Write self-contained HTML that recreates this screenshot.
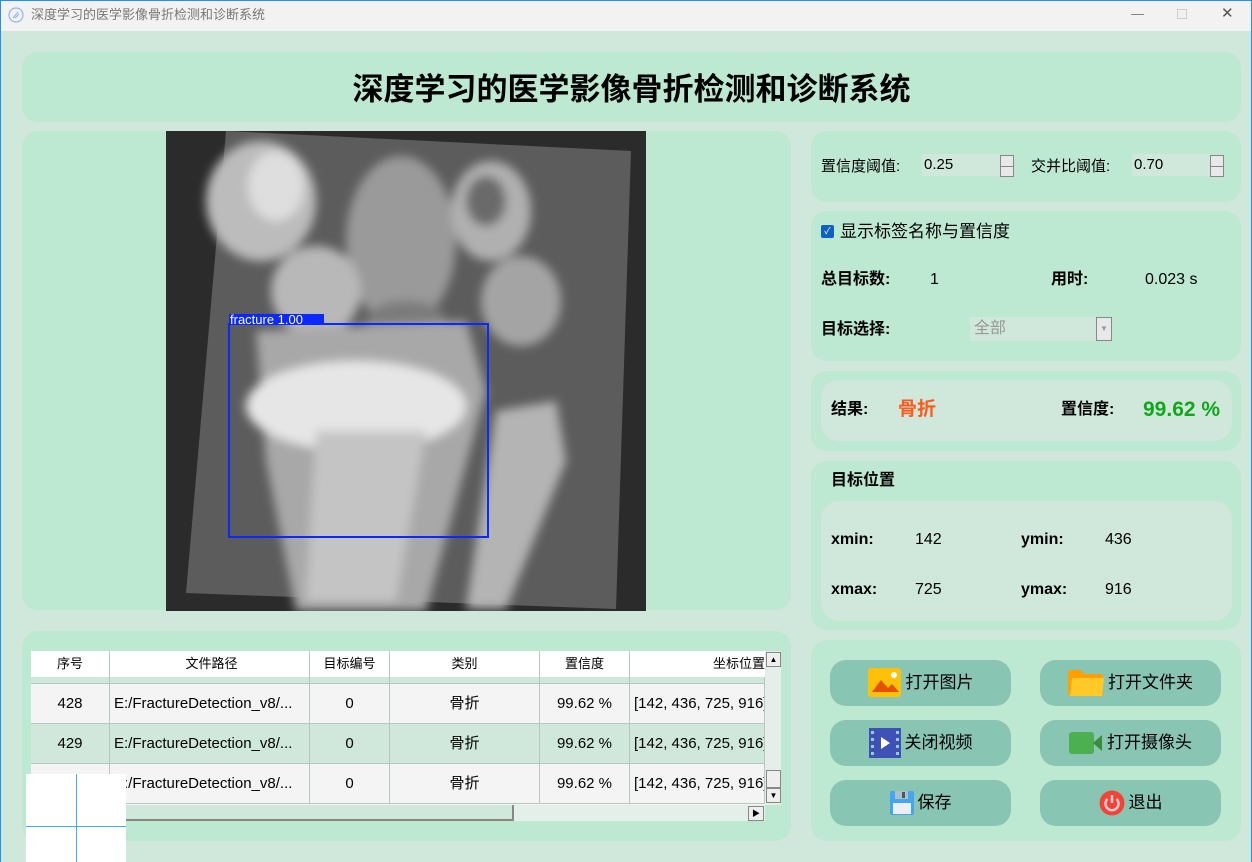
<!DOCTYPE html>
<html><head><meta charset="utf-8"><style>
*{margin:0;padding:0;box-sizing:border-box}
body{width:1252px;height:862px;overflow:hidden;background:#cfe8db;font-family:"Liberation Sans","Noto Sans CJK SC",sans-serif;position:relative;color:#000}
.a{position:absolute;line-height:20px;white-space:nowrap}
.p{position:absolute;background:#bde9d3;border-radius:16px}
.in{position:absolute;background:#cfe8db;border-radius:18px}
.b{font-weight:bold}
.btn{position:absolute;width:181px;height:46px;background:#88c5b2;border-radius:16px;font-size:17px;display:flex;align-items:center;justify-content:center;gap:4px;line-height:20px}
.spin{position:absolute;width:14px;height:22px;background:#e8e8e8;border:1px solid #888}
.spin:after{content:"";position:absolute;left:0;right:0;top:10px;border-top:1px solid #888}
.row{position:absolute;left:0;width:734px;height:40px;border-bottom:1px solid #b8c8c0;font-size:15px}
.row div{position:absolute;top:0;height:40px;line-height:40px;text-align:center;border-right:1px solid #b8c8c0;overflow:hidden;white-space:nowrap}
.c1{left:0;width:79px}.c2{left:79px;width:200px;text-align:left!important;padding-left:4px}.c3{left:279px;width:80px}.c4{left:359px;width:150px}.c5{left:509px;width:90px}.c6{left:599px;width:135px;text-align:left!important;padding-left:4px}
</style></head><body>
<div class="a" style="left:0;top:0;width:1252px;height:31px;background:#f2f2f2;border-top:1px solid #1e90ff"></div>
<div class="a" style="left:0;top:0;width:1px;height:862px;background:#1e90ff"></div>
<div class="a" style="right:0;top:0;width:1px;height:862px;background:#1e90ff"></div>
<svg class="a" style="left:8px;top:7px" width="16" height="16"><circle cx="8" cy="8" r="7" fill="none" stroke="#8fb8e8" stroke-width="1.2"/><path d="M5 11 L10 5 M7 11 L11 7" stroke="#8fb8e8" stroke-width="1.2"/></svg>
<div class="a" style="left:31px;top:5px;font-size:13px;color:#777">深度学习的医学影像骨折检测和诊断系统</div>
<div class="a" style="left:1131px;top:4px;font-size:13px;color:#777">—</div>
<div class="a" style="left:1177px;top:9px;width:10px;height:10px;border:1px solid #ccc"></div>
<div class="a" style="left:1221px;top:4px;font-size:15px;color:#555">✕</div>

<div class="p" style="left:22px;top:52px;width:1219px;height:70px"></div>
<div class="a b" style="left:22px;top:72px;width:1219px;text-align:center;font-size:31px;line-height:36px">深度学习的医学影像骨折检测和诊断系统</div>

<div class="p" style="left:22px;top:131px;width:769px;height:479px"></div>
<svg class="a" style="left:166px;top:131px" width="480" height="480">
<defs><filter id="bl"><feGaussianBlur stdDeviation="5"/></filter></defs>
<rect width="480" height="480" fill="#2b2b2b"/>
<polygon points="60,0 465,20 450,478 20,462" fill="#5c5c5c"/>
<g filter="url(#bl)">
<ellipse cx="95" cy="70" rx="55" ry="60" fill="#bcbcbc"/><ellipse cx="110" cy="55" rx="28" ry="35" fill="#dedede"/>
<ellipse cx="235" cy="110" rx="55" ry="85" fill="#9a9a9a"/>
<ellipse cx="325" cy="80" rx="40" ry="50" fill="#b0b0b0"/><ellipse cx="320" cy="70" rx="20" ry="25" fill="#6a6a6a"/>
<ellipse cx="150" cy="160" rx="45" ry="45" fill="#b8b8b8"/><ellipse cx="355" cy="170" rx="40" ry="45" fill="#a4a4a4"/>
<ellipse cx="240" cy="190" rx="40" ry="20" fill="#7a7a7a"/>
<polygon points="90,200 300,190 320,260 260,480 130,480 100,330" fill="#a8a8a8"/>
<ellipse cx="190" cy="275" rx="110" ry="45" fill="#e6e6e6"/>
<polygon points="150,300 260,300 230,470 140,470" fill="#c4c4c4"/>
<polygon points="330,280 390,270 400,330 340,478 300,478" fill="#b4b4b4"/>
</g>
<rect x="63" y="193" width="259" height="213" fill="none" stroke="#0a28ff" stroke-width="2"/>
<rect x="63" y="183" width="95" height="11" fill="#0a28ff"/>
<text x="64" y="193" fill="#fff" font-size="13" font-family="Liberation Sans">fracture  1.00</text>
</svg>

<div class="p" style="left:22px;top:631px;width:769px;height:210px"></div>
<div class="a" style="left:31px;top:651px;width:734px;height:154px;overflow:hidden;background:#f4f4f4">
<div class="row" style="top:0;height:26px;background:#fff;border:0;font-size:13px"><div class="c1" style="height:26px;line-height:26px">序号</div><div class="c2" style="height:26px;line-height:26px;text-align:center!important">文件路径</div><div class="c3" style="height:26px;line-height:26px">目标编号</div><div class="c4" style="height:26px;line-height:26px">类别</div><div class="c5" style="height:26px;line-height:26px">置信度</div><div class="c6" style="height:26px;line-height:26px;text-align:right!important;padding-left:0;border:0">坐标位置</div></div>
<div class="row" style="top:26px;height:7px;background:#cfe8db"><div class="c1" style="height:7px"></div><div class="c2" style="height:7px"></div><div class="c3" style="height:7px"></div><div class="c4" style="height:7px"></div><div class="c5" style="height:7px"></div><div class="c6" style="height:7px"></div></div>
<div class="row" style="top:33px"><div class="c1">428</div><div class="c2">E:/FractureDetection_v8/...</div><div class="c3">0</div><div class="c4">骨折</div><div class="c5">99.62 %</div><div class="c6">[142, 436, 725, 916]</div></div>
<div class="row" style="top:73px;background:#cfe8db"><div class="c1">429</div><div class="c2">E:/FractureDetection_v8/...</div><div class="c3">0</div><div class="c4">骨折</div><div class="c5">99.62 %</div><div class="c6">[142, 436, 725, 916]</div></div>
<div class="row" style="top:113px"><div class="c1">430</div><div class="c2">E:/FractureDetection_v8/...</div><div class="c3">0</div><div class="c4">骨折</div><div class="c5">99.62 %</div><div class="c6">[142, 436, 725, 916]</div></div>
</div>
<div class="a" style="left:765px;top:651px;width:16px;height:154px;background:#e4efe9"></div>
<div class="a" style="left:766px;top:652px;width:15px;height:15px;background:#eee;border:1px solid #888;font-size:8px;text-align:center;line-height:13px">▲</div>
<div class="a" style="left:766px;top:770px;width:15px;height:18px;background:#eee;border:1px solid #888"></div>
<div class="a" style="left:766px;top:788px;width:15px;height:15px;background:#eee;border:1px solid #888;font-size:8px;text-align:center;line-height:13px">▼</div>
<div class="a" style="left:110px;top:805px;width:655px;height:16px;background:#e4efe9"></div>
<div class="a" style="left:110px;top:805px;width:404px;height:16px;background:#cfe8db;border-bottom:2px solid #888;border-right:2px solid #888"></div>
<div class="a" style="left:748px;top:806px;width:16px;height:15px;background:#eee;border:1px solid #888;font-size:8px;text-align:center;line-height:13px">▶</div>
<div class="a" style="left:26px;top:774px;width:100px;height:88px;background:#fff"></div>
<div class="a" style="left:76px;top:774px;width:1px;height:88px;background:#44aaff"></div>
<div class="a" style="left:26px;top:826px;width:100px;height:1px;background:#44aaff"></div>

<div class="p" style="left:811px;top:131px;width:430px;height:71px"></div>
<div class="a" style="left:821px;top:157px;font-size:15px">置信度阈值:</div>
<div class="a" style="left:922px;top:154px;width:78px;height:22px;background:#cfe8db;font-size:15px;padding:1px 2px">0.25</div>
<div class="spin" style="left:1000px;top:155px"></div>
<div class="a" style="left:1031px;top:157px;font-size:15px">交并比阈值:</div>
<div class="a" style="left:1132px;top:154px;width:78px;height:22px;background:#cfe8db;font-size:15px;padding:1px 2px">0.70</div>
<div class="spin" style="left:1210px;top:155px"></div>

<div class="p" style="left:811px;top:211px;width:430px;height:150px"></div>
<div class="a" style="left:821px;top:225px;width:13px;height:13px;background:#0b62c4;border-radius:2px;color:#fff;font-size:9px;line-height:13px;text-align:center">✓</div>
<div class="a" style="left:840px;top:222px;font-size:17px">显示标签名称与置信度</div>
<div class="a b" style="left:821px;top:270px;font-size:16px">总目标数:</div>
<div class="a" style="left:930px;top:270px;font-size:16px">1</div>
<div class="a b" style="left:1051px;top:270px;font-size:16px">用时:</div>
<div class="a" style="left:1145px;top:270px;font-size:16px">0.023 s</div>
<div class="a b" style="left:821px;top:320px;font-size:16px">目标选择:</div>
<div class="a" style="left:970px;top:317px;width:127px;height:24px;background:#cfe8db;font-size:16px;color:#999;padding:2px 4px">全部</div>
<div class="a" style="left:1096px;top:317px;width:16px;height:24px;background:#e8e8e8;border:1px solid #888;font-size:8px;color:#999;text-align:center;line-height:22px">▼</div>

<div class="p" style="left:811px;top:371px;width:430px;height:80px"></div>
<div class="in" style="left:821px;top:380px;width:411px;height:61px"></div>
<div class="a b" style="left:831px;top:400px;font-size:16px">结果:</div>
<div class="a b" style="left:898px;top:400px;font-size:19px;color:#ff5a1a">骨折</div>
<div class="a b" style="left:1061px;top:400px;font-size:16px">置信度:</div>
<div class="a b" style="left:1143px;top:400px;font-size:21px;color:#10a81a">99.62 %</div>

<div class="p" style="left:811px;top:461px;width:430px;height:169px"></div>
<div class="a b" style="left:831px;top:471px;font-size:16px">目标位置</div>
<div class="in" style="left:821px;top:501px;width:411px;height:120px"></div>
<div class="a b" style="left:831px;top:530px;font-size:16px">xmin:</div><div class="a" style="left:915px;top:530px;font-size:16px">142</div>
<div class="a b" style="left:1021px;top:530px;font-size:16px">ymin:</div><div class="a" style="left:1105px;top:530px;font-size:16px">436</div>
<div class="a b" style="left:831px;top:580px;font-size:16px">xmax:</div><div class="a" style="left:915px;top:580px;font-size:16px">725</div>
<div class="a b" style="left:1021px;top:580px;font-size:16px">ymax:</div><div class="a" style="left:1105px;top:580px;font-size:16px">916</div>

<div class="p" style="left:811px;top:640px;width:430px;height:201px"></div>
<div class="btn" style="left:830px;top:660px"><svg width="34" height="30"><rect width="33" height="29" rx="3" fill="#ffc107"/><path d="M4 24 L13 12 L20 20 L24 16 L31 24Z" fill="#e65100"/><circle cx="26" cy="7" r="3" fill="#fff"/></svg>打开图片</div>
<div class="btn" style="left:1040px;top:660px"><svg width="36" height="28"><path d="M0 4 Q0 1 3 1 L13 1 L16 5 L33 5 Q35 5 35 8 L35 26 L0 26Z" fill="#ffa000"/><path d="M4 9 L36 9 L34 27 L2 27Z" fill="#ffca28"/></svg>打开文件夹</div>
<div class="btn" style="left:830px;top:720px"><svg width="32" height="30"><rect width="32" height="30" fill="#3f51b5"/><g fill="#90caf9"><rect x="2" y="3" width="3" height="3"/><rect x="2" y="10" width="3" height="3"/><rect x="2" y="17" width="3" height="3"/><rect x="2" y="24" width="3" height="3"/><rect x="27" y="3" width="3" height="3"/><rect x="27" y="10" width="3" height="3"/><rect x="27" y="17" width="3" height="3"/><rect x="27" y="24" width="3" height="3"/></g><path d="M12 9 L21 15 L12 21Z" fill="#fff"/></svg>关闭视频</div>
<div class="btn" style="left:1040px;top:720px"><svg width="34" height="22"><rect width="25" height="22" rx="3" fill="#4caf50"/><path d="M24 11 L33 3 L33 19Z" fill="#388e3c"/></svg>打开摄像头</div>
<div class="btn" style="left:830px;top:780px"><svg width="24" height="24"><rect width="24" height="24" rx="2" fill="#42a5f5"/><rect x="5" y="0" width="13" height="8" fill="#b0bec5"/><rect x="12" y="1" width="3" height="6" fill="#455a64"/><rect x="3" y="12" width="18" height="11" fill="#eceff1"/></svg>保存</div>
<div class="btn" style="left:1040px;top:780px"><svg width="26" height="26"><circle cx="13" cy="13" r="12.5" fill="#f44336"/><path d="M8.5 9 A6.5 6.5 0 1 0 17.5 9" fill="none" stroke="#ffcdd2" stroke-width="2.5"/><path d="M13 5 L13 13" stroke="#ffcdd2" stroke-width="2.5"/></svg>退出</div>
</body></html>
